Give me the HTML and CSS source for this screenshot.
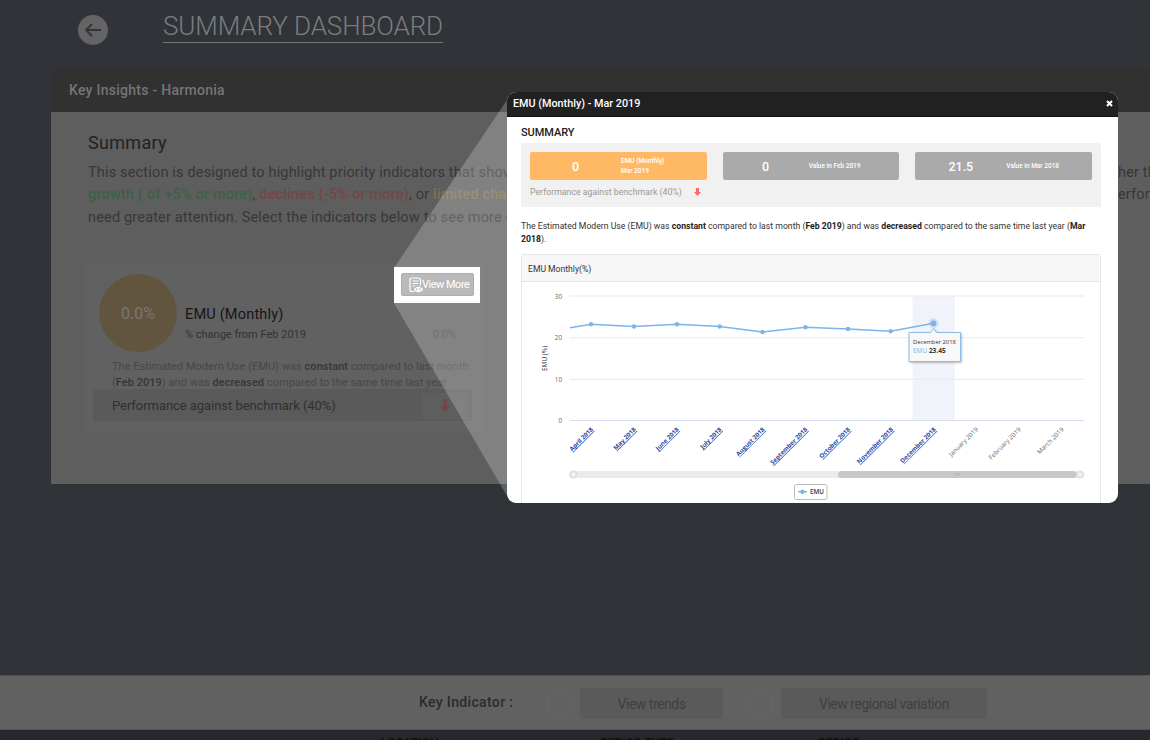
FILE: index.html
```
<!DOCTYPE html>
<html lang="en">
<head>
    <meta charset="UTF-8">
    <meta name="viewport" content="width=device-width, initial-scale=1.0">
    <title>Summary Dashboard</title>
    <link rel="stylesheet" href="styles.css">
</head>
<body>
    <div class="page">
        <div class="top">
            <svg class="back" width="30" height="30" viewBox="0 0 30 30">
                <circle cx="15" cy="15" r="15" fill="#646464"/>
                <path d="M23 15H8M14 9L8 15L14 21" fill="none" stroke="#303439" stroke-width="1.8"/>
            </svg>
            <h1>SUMMARY DASHBOARD</h1>
        </div>
        <div class="panel">
            <div class="panel-header">Key Insights - Harmonia</div>
            <div class="panel-body">
                <h2>Summary</h2>
                <div class="line"><span class="line-start">This section is designed to highlight priority indicators that show</span><span>her th</span></div>
                <div class="line"><span class="line-start"><b class="green">growth ( of +5% or more)</b>, <b class="red">declines (-5% or more)</b>, or <b class="amber">limited cha</b></span><span>erform</span></div>
                <div class="line"><span class="line-start">need greater attention. Select the indicators below to see more d</span></div>
                <div class="card">
                    <div class="card-top">
                        <div class="circle">0.0%</div>
                        <div class="card-info">
                            <div class="card-title">EMU (Monthly)</div>
                            <div class="card-change"><span>% change from Feb 2019</span><span class="faint">0.0%</span></div>
                        </div>
                    </div>
                    <p class="card-text">The Estimated Modern Use (EMU) was <b>constant</b> compared to last month<br>(<b>Feb 2019</b>) and was <b>decreased</b> compared to the same time last year</p>
                    <div class="benchmark">
                        <span>Performance against benchmark (40%)</span>
                        <div class="arrow-box">
                            <svg width="10" height="13" viewBox="0 0 10 13"><path d="M3 0h4v7h3L5 13 0 7h3z" fill="#714747"/></svg>
                        </div>
                    </div>
                </div>
            </div>
        </div>
        <div class="indicator-bar">
            <span class="indicator-label">Key Indicator :</span>
            <span class="check"></span>
            <span class="option trends">View trends</span>
            <span class="check"></span>
            <span class="option regional">View regional variation</span>
        </div>
        <div class="footer">
            <span>LOCATION</span>
            <span>PERIOD TYPE</span>
            <span>PERIOD</span>
        </div>
    </div>

    <svg class="beam" width="113" height="396" viewBox="0 0 113 396">
        <path d="M0 168L113 0V396L0 203z" fill="#fff" fill-opacity="0.22"/>
    </svg>

    <div class="highlight">
        <div class="view-more">
            <svg width="14" height="16" viewBox="0 0 14 16" fill="none" stroke="#fff" stroke-width="1.2">
                <path d="M5.5 14.500H3Q1 14.500 1 12.500V3Q1 1 3 1H9.500Q11.500 1 11.500 3V8.500M3.500 4H9.500M3.500 6.500H9.500M3.500 9H6"/>
                <path d="M5.500 12.500Q9.500 7.800 13.500 12.500Q9.500 17 5.500 12.500z" fill="#bbb"/>
                <circle cx="9.500" cy="12.500" r="1"/>
            </svg>
            <span>View More</span>
        </div>
    </div>

    <div class="modal">
        <div class="modal-header">
            <span>EMU (Monthly) - Mar 2019</span>
            <svg width="7" height="7" viewBox="0 0 7 7"><path d="M1 1L6 6M6 1L1 6" stroke="#fff" stroke-width="2"/></svg>
        </div>
        <div class="modal-body">
            <h3>SUMMARY</h3>
            <div class="summary-box">
                <div class="tiles">
                    <div class="tile orange"><b>0</b><span>EMU (Monthly)<br>Mar 2019</span></div>
                    <div class="tile"><b>0</b><span>Value in Feb 2019</span></div>
                    <div class="tile"><b>21.5</b><span>Value in Mar 2018</span></div>
                </div>
                <div class="performance">
                    <span>Performance against benchmark (40%)</span>
                    <svg width="7" height="8" viewBox="0 0 7 8"><path d="M2 0h3v4h2L3.500 8 0 4h2z" fill="#fb6a6a"/></svg>
                </div>
            </div>
            <p class="modal-text">The Estimated Modern Use (EMU) was <b>constant</b> compared to last month (<b>Feb 2019</b>) and was <b>decreased</b> compared to the same time last year (<b>Mar<br>2018</b>).</p>
            <div class="chart-panel">
                <div class="chart-header">EMU Monthly(%)</div>
                <svg class="chart" width="578" height="221" viewBox="522 282 578 221">
                    <rect x="912.500" y="296" width="42.500" height="124.500" fill="#f0f4fa"/>
                    <path d="M570 296H1084M570 337.700H1084M570 379.300H1084" stroke="#e9e9e9"/>
                    <path d="M570 420.500H1084" stroke="#d8def0"/>
                    <g class="axis" text-anchor="end">
                        <text x="562" y="299">30</text>
                        <text x="562" y="340">20</text>
                        <text x="562" y="381.700">10</text>
                        <text x="562" y="423">0</text>
                    </g>
                    <text class="axis-title" transform="translate(547 358.500) rotate(-90)" text-anchor="middle">EMU (%)</text>
                    <path d="M570 327.800L591 324.300L634 326.500L677 324.300L719.700 326.500L762.500 332L805.500 327.200L848 329L890.700 331.200L933.500 323.300" fill="none" stroke="#7cb5ec" stroke-width="1.600"/>
                    <g fill="#7cb5ec">
                        <circle cx="591" cy="324.300" r="2.200"/>
                        <circle cx="634" cy="326.500" r="2.200"/>
                        <circle cx="677" cy="324.300" r="2.200"/>
                        <circle cx="719.700" cy="326.500" r="2.200"/>
                        <circle cx="762.500" cy="332" r="2.200"/>
                        <circle cx="805.500" cy="327.200" r="2.200"/>
                        <circle cx="848" cy="329" r="2.200"/>
                        <circle cx="890.700" cy="331.200" r="2.200"/>
                        <circle cx="933.500" cy="323.300" r="5" fill-opacity="0.3"/>
                        <circle cx="933.500" cy="323.300" r="2.900"/>
                    </g>
                    <g class="months" text-anchor="end">
                        <text transform="translate(593.500 430) rotate(-45)">April 2018</text>
                        <text transform="translate(636.300 430) rotate(-45)">May 2018</text>
                        <text transform="translate(679.200 430) rotate(-45)">June 2018</text>
                        <text transform="translate(722 430) rotate(-45)">July 2018</text>
                        <text transform="translate(765 430) rotate(-45)">August 2018</text>
                        <text transform="translate(807.800 430) rotate(-45)">September 2018</text>
                        <text transform="translate(850.600 430) rotate(-45)">October 2018</text>
                        <text transform="translate(893.500 430) rotate(-45)">November 2018</text>
                        <text transform="translate(936.300 430) rotate(-45)">December 2018</text>
                    </g>
                    <g class="axis" text-anchor="end">
                        <text transform="translate(978.500 430) rotate(-45)">January 2019</text>
                        <text transform="translate(1021.300 430) rotate(-45)">February 2019</text>
                        <text transform="translate(1064.200 430) rotate(-45)">March 2019</text>
                    </g>
                    <rect x="569" y="471" width="515" height="7" rx="3.500" fill="#ebebeb"/>
                    <circle cx="573.500" cy="474.500" r="4" fill="#e0e0e0"/>
                    <circle cx="573.500" cy="474.500" r="2" fill="#f5f5f5"/>
                    <circle cx="1080" cy="474.500" r="4" fill="#e0e0e0"/>
                    <circle cx="1080" cy="474.500" r="2" fill="#f5f5f5"/>
                    <rect x="838" y="471" width="238.500" height="7" rx="3.500" fill="#c8c8c8"/>
                    <path d="M955 473v3M957 473v3M959 473v3" stroke="#b4b4b4"/>
                    <rect x="794.500" y="484.500" width="32.500" height="15" rx="2" fill="#fff" stroke="#bbb"/>
                    <path d="M798 491.700H807" stroke="#7cb5ec" stroke-width="1.400"/>
                    <circle cx="802.500" cy="491.700" r="2.200" fill="#7cb5ec"/>
                    <text class="legend" x="810" y="494">EMU</text>
                    <path class="tip" d="M909 332.500H930.500L933.500 328.500L936.500 332.500H960.500V361.500H909z"/>
                    <text class="tip-date" x="913" y="343.500">December 2018</text>
                    <text class="tip-name" x="913" y="353.300">EMU <tspan class="tip-value">23.45</tspan></text>
                </svg>
            </div>
        </div>
    </div>
</body>
</html>
```
FILE: styles.css
```
* {
    box-sizing: border-box;
}
body {
    margin: 0;
    width: 1150px;
    height: 740px;
    overflow: hidden;
    position: relative;
    font-family: Roboto, sans-serif;
    background-color: #303439;
}
h1, h2, h3, p {
    margin: 0;
    font-weight: 400;
}
.page {
    height: 740px;
    display: flex;
    flex-direction: column;
    overflow: hidden;
}
.top {
    height: 68px;
    flex-shrink: 0;
    display: flex;
    align-items: flex-start;
    padding: 11px 0 0 78px;
}
.back {
    margin: 4px 55px 0 0;
}
h1 {
    font-size: 26px;
    font-weight: 300;
    line-height: 31px;
    letter-spacing: -0.1px;
    color: #7c7c7c;
    border-bottom: 1px solid #757575;
    white-space: nowrap;
}
.panel {
    margin-left: 51px;
    height: 416px;
    flex-shrink: 0;
    background-color: #5e5e5e;
    border-radius: 4px 0 0 0;
    overflow: hidden;
}
.panel-header {
    height: 44px;
    padding-left: 18px;
    background-color: #313131;
    color: #757575;
    font-size: 14px;
    font-weight: 500;
    line-height: 44px;
    letter-spacing: 0.27px;
}
.panel-body {
    padding: 18px 0 0 37px;
}
h2 {
    font-size: 18px;
    line-height: 25px;
    margin-bottom: 6px;
    color: #222;
    letter-spacing: 0.3px;
}
.line {
    display: flex;
    height: 22.3px;
    line-height: 23px;
    font-size: 14.5px;
    letter-spacing: 0.17px;
    white-space: nowrap;
    color: #373737;
}
.line-start {
    width: 1030px;
    flex-shrink: 0;
}
.line b {
    font-weight: 500;
}
.green {
    color: #3d6047;
}
.red {
    color: #744646;
}
.amber {
    color: #80704f;
}
.card {
    width: 398px;
    height: 168px;
    margin: 36px 0 0 -4px;
    padding: 10px 10px 0 9px;
    background-color: #616161;
    border-radius: 3px;
}
.card-top {
    display: flex;
    padding-left: 6px;
}
.circle {
    width: 78px;
    height: 78px;
    border-radius: 50%;
    background-color: #625540;
    color: #777;
    text-align: center;
    line-height: 79px;
    font-size: 16px;
}
.card-info {
    flex: 1;
    padding: 31px 0 0 8px;
    white-space: nowrap;
}
.card-title {
    font-size: 14.5px;
    line-height: 20px;
    color: #151515;
    letter-spacing: 0.2px;
}
.card-change {
    display: flex;
    justify-content: space-between;
    padding-right: 16px;
    font-size: 11px;
    line-height: 19px;
    color: #323232;
}
.faint {
    color: #494949;
}
.card-text {
    padding: 7px 0 0 19px;
    font-size: 11px;
    line-height: 16.3px;
    color: #474747;
    white-space: nowrap;
    letter-spacing: 0.04px;
}
.card-text b {
    font-weight: 500;
    color: #363636;
}
.benchmark {
    display: flex;
    justify-content: space-between;
    align-items: center;
    height: 32px;
    margin-top: -2px;
    padding: 1px 5px 0 19px;
    background-color: #5a5a5a;
    border-radius: 3px;
    font-size: 13px;
    letter-spacing: -0.05px;
    color: #303030;
    white-space: nowrap;
}
.arrow-box {
    width: 44px;
    height: 26px;
    display: flex;
    justify-content: center;
    align-items: center;
    background-color: #5e5e5e;
}
.indicator-bar {
    display: flex;
    align-items: center;
    height: 55px;
    flex-shrink: 0;
    margin-top: 191px;
    padding: 2px 0 0 419px;
    border-top: 1px solid #515355;
    border-bottom: 1px solid #515355;
    background-color: #616161;
    white-space: nowrap;
}
.indicator-label {
    width: 129px;
    margin-top: -3px;
    font-size: 14px;
    font-weight: 500;
    color: #2a2c2f;
    letter-spacing: 0.35px;
}
.check {
    width: 23px;
    height: 23px;
    border: 1px solid #656565;
    border-radius: 3px;
}
.option {
    height: 31px;
    margin: 0 26px 0 9px;
    border-radius: 3px;
    background-color: #5a5a5a;
    color: #3f3f3f;
    font-size: 14px;
    line-height: 32px;
    letter-spacing: -0.48px;
    text-align: center;
}
.trends {
    width: 143px;
}
.regional {
    width: 206px;
}
.footer {
    display: grid;
    grid-template-columns: 219px 218px 200px;
    height: 10px;
    flex-shrink: 0;
    overflow: hidden;
    padding: 6px 0 0 381px;
    background-color: #25282d;
    color: #101116;
    font-size: 12px;
    font-weight: 700;
    line-height: 14px;
}
.beam {
    position: absolute;
    left: 394px;
    top: 100px;
}
.highlight {
    position: absolute;
    left: 394px;
    top: 267px;
    width: 86px;
    height: 36px;
    padding: 6px 7px;
    background-color: #fff;
}
.view-more {
    display: flex;
    align-items: center;
    width: 73px;
    height: 23px;
    padding-left: 7px;
    background-color: #bababa;
    border: 1px solid #adadad;
    border-radius: 2px;
    color: #fff;
    font-size: 11px;
    letter-spacing: -0.5px;
    white-space: nowrap;
}
.view-more span {
    margin-left: -1px;
}
.view-more svg {
    flex-shrink: 0;
}
.modal {
    position: absolute;
    left: 507px;
    top: 92px;
    width: 611px;
    height: 411px;
    border-radius: 9px;
    overflow: hidden;
    background-color: #fff;
}
.modal-header {
    display: flex;
    justify-content: space-between;
    align-items: center;
    height: 25px;
    padding: 0 5px 2px 6px;
    background-color: #212121;
    border-bottom: 1px solid #111;
    color: #fff;
    font-size: 10.8px;
    font-weight: 500;
}
.modal-header span {
    padding-top: 1px;
}
.modal-body {
    padding: 8px 17px 0 14px;
}
h3 {
    font-size: 11px;
    line-height: 15px;
    color: #222;
    font-weight: 500;
    letter-spacing: -0.05px;
}
.summary-box {
    height: 64px;
    margin-top: 3px;
    padding: 9px 9px 0;
    background-color: #f1f1f1;
    border-radius: 2px;
}
.tiles {
    display: grid;
    grid-template-columns: 1fr 1fr 1fr;
    gap: 16px;
}
.tile {
    display: flex;
    align-items: center;
    height: 28px;
    border-radius: 2px;
    background-color: #aaa;
    color: #fff;
}
.tile b {
    width: 86px;
    flex-shrink: 0;
    text-align: center;
    font-size: 12.5px;
    font-weight: 500;
}
.tile span {
    font-size: 6.5px;
    line-height: 10px;
    font-weight: 500;
    white-space: nowrap;
}
.tile.orange {
    background-color: #ffb965;
}
.tile.orange b {
    width: 91px;
}
.tile:last-child b {
    width: 91px;
}
.performance {
    display: flex;
    align-items: center;
    gap: 12px;
    height: 23px;
    font-size: 8.75px;
    color: #999;
}
.modal-text {
    margin-top: 13px;
    font-size: 8.68px;
    line-height: 13.2px;
    color: #333;
    white-space: nowrap;
}
.modal-text b {
    font-weight: 700;
    color: #222;
}
.chart-panel {
    margin-top: 8px;
    height: 252px;
    border: 1px solid #e8e8e8;
    border-radius: 2px;
}
.chart-header {
    height: 27px;
    padding-left: 6px;
    border-bottom: 1px solid #e4e4e4;
    background-color: #f7f7f7;
    color: #333;
    font-size: 8.6px;
    line-height: 29px;
}
.chart {
    display: block;
    font-family: "Open Sans", sans-serif;
}
.axis {
    font-size: 6.3px;
    fill: #666;
}
.axis-title {
    font-size: 6.5px;
    fill: #333;
}
.months {
    font-size: 6.2px;
    font-weight: 700;
    fill: #1f4aa8;
    text-decoration: underline;
}
.legend {
    font-size: 6.3px;
    font-weight: 600;
    fill: #333;
}
.tip {
    fill: #f8f8f8;
    stroke: #8dbbe5;
    filter: drop-shadow(1px 1px 1px rgba(0,0,0,0.25));
}
.tip-date {
    font-size: 5.8px;
    fill: #333;
}
.tip-name {
    font-size: 6.5px;
    fill: #7cb5ec;
}
.tip-value {
    fill: #333;
    font-weight: 700;
}
```
